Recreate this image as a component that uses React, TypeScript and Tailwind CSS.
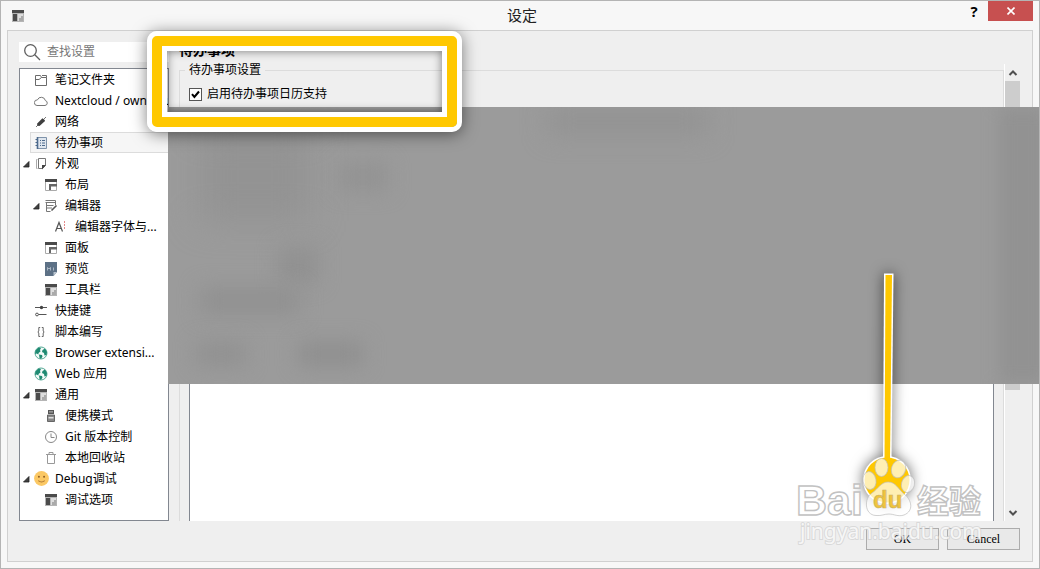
import React, { useState } from 'react';

const S = 'w-[14px] h-[14px] shrink-0';

const FolderIcon = () => (
    <svg viewBox="0 0 14 14" className={S} fill="none" stroke="#6b6b6b">
        <path d="M1.5 12.5V2.5H6.5L7.5 4.5H12.5V12.5Z" />
        <path d="M1.5 6.5H5L7.5 4.5M8 2.5H12.5V4.5" />
    </svg>
);
const CloudIcon = () => (
    <svg viewBox="0 0 14 14" className={S} fill="none" stroke="#777">
        <path d="M3 11.5H11A2.5 2.5 0 0 0 11.4 6.6A4.2 4.2 0 0 0 3.4 5.9A2.8 2.8 0 0 0 3 11.5Z" />
    </svg>
);
const PlugIcon = () => (
    <svg viewBox="0 0 14 14" className={S}>
        <path d="M2 12L4.5 9.5M9.5 4.5L12 2" stroke="#777" />
        <path d="M3 8.8L8.4 3.2L11 5.3L10.5 6.5L5.5 11L3.5 10.8Z" fill="#3f3f3f" />
    </svg>
);
const TodoIcon = () => (
    <svg viewBox="0 0 14 14" className={S} stroke="#4d6a8c">
        <path d="M3.5 1.5H12.5V12.5H3.5Z" fill="#dfe6ee" stroke="#7f93aa" />
        <path d="M3.5 1V13" strokeWidth="1.6" />
        <path d="M1.5 3.5H4M1.5 6.5H4M1.5 9.5H4M6 4.5H7M8 4.5H11M6 7H7M8 7H11M6 9.5H7M8 9.5H11" />
    </svg>
);
const LookIcon = () => (
    <svg viewBox="0 0 14 14" className={S} fill="none">
        <path d="M3.5 11.5H2.5V2.5H3.5" stroke="#aaa" />
        <path d="M4.5 1.5H11.5V8.5L8.5 11.5H4.5Z" stroke="#777" />
        <path d="M12 8L8 12.5V8Z" fill="#444" />
    </svg>
);
const LayoutIcon = () => (
    <svg viewBox="0 0 14 14" className={S}>
        <path d="M1.5 2.5H12.5V12.5H1.5Z" fill="#fff" stroke="#aaa" />
        <path d="M1 1H13V4H1Z" fill="#4a4a4a" />
        <path d="M5 6H13V8.5H7V12H5Z" fill="#666" />
    </svg>
);
const EditIcon = () => (
    <svg viewBox="0 0 14 14" className={S} fill="none" stroke="#777">
        <path d="M1.5 1.5H11.5V6M1.5 3.5H11.5M3 6.5H9.5M3 9H8M2.5 4V12.5H6.5" />
        <path d="M7.5 11.5L12.5 6.5" stroke="#555" strokeWidth="1.6" />
    </svg>
);
const FontIcon = () => (
    <svg viewBox="0 0 14 14" className={S} fill="none" stroke="#555">
        <path d="M1.5 11.5L5 2.5L8.5 11.5M2.8 8.5H7.2" strokeWidth="1.2" />
        <path d="M10.5 1V9" stroke="#e58a8a" strokeDasharray="2 1" />
    </svg>
);
const PreviewIcon = () => (
    <svg viewBox="0 0 14 14" className={S}>
        <path d="M1 0H13V10L9.5 14H1Z" fill="#5d7186" />
        <path d="M13 10H9.5V14Z" fill="#b8c3ce" />
        <path d="M3.5 8.5V5.5L5 7L6.5 5.5V8.5M9.5 5.5V8.5" stroke="#b4c0cb" strokeWidth="0.9" fill="none" />
    </svg>
);
const PanelIcon = () => (
    <svg viewBox="0 0 14 14" className={S}>
        <path d="M1 1H13V13H1Z" fill="#b5b5b5" />
        <path d="M1 1H13V4H1ZM2 5H6V12H2Z" fill="#4b4b4b" />
        <path d="M7 5H12V12H7Z" fill="#ddd" />
        <path d="M8 12V9H10V7H12V12Z" fill="#aaa" />
    </svg>
);
const SlidersIcon = () => (
    <svg viewBox="0 0 14 14" className={S} fill="none" stroke="#555">
        <path d="M1 3.5H13M4.5 10.5H12.5" />
        <circle cx="7.5" cy="3.5" r="1.7" fill="#444" stroke="none" />
        <circle cx="3" cy="10.5" r="1.4" />
    </svg>
);
const BracesIcon = () => (
    <svg viewBox="0 0 14 14" className={S} fill="none" stroke="#666">
        <path d="M6.2 2.5H4.8V6L3.8 7L4.8 8V11.5H6.2M7.8 2.5H9.2V6L10.2 7L9.2 8V11.5H7.8" />
    </svg>
);
const GlobeIcon = () => (
    <svg viewBox="0 0 14 14" className={S}>
        <circle cx="7" cy="7" r="6" fill="#f3faf8" stroke="#46a08b" strokeWidth="0.9" />
        <path d="M1.5 4.5L4.5 1.4L7 2L6 4L6.5 5.5L4.5 7L4.5 8.5L2.5 7.5L1 8ZM8.5 4L11 2.5L13 6L12.5 9L10.5 9.5L10 7L8 6ZM5 8.5L8 9L8.5 10.5L7 13L5.5 12Z" fill="#1f8a72" />
    </svg>
);
const DriveIcon = () => (
    <svg viewBox="0 0 14 14" className={S}>
        <path d="M4 1H10V5H4Z" fill="#555" />
        <path d="M5.5 2.3H6.5V3.5H5.5ZM7.5 2.3H8.5V3.5H7.5Z" fill="#fff" />
        <path d="M3.5 6H10.5V12.5H3.5Z" fill="#888" stroke="#666" />
        <path d="M4.5 8H9.5V9.5H4.5Z" fill="#ddd" />
    </svg>
);
const ClockIcon = () => (
    <svg viewBox="0 0 14 14" className={S} fill="none" stroke="#888">
        <circle cx="7" cy="7" r="5.5" />
        <path d="M7 3.5V7.5H10.5" />
    </svg>
);
const TrashIcon = () => (
    <svg viewBox="0 0 14 14" className={S} fill="none" stroke="#999">
        <path d="M2 3.5H12M5 3V1.5H9V3M3.5 4V12.5H10.5V4" />
    </svg>
);
const SmileIcon = () => (
    <svg viewBox="0 0 14 14" className="h-[15px] w-[15px] shrink-0 -mr-px">
        <circle cx="7" cy="7" r="6.9" fill="#fbc864" />
        <circle cx="4.6" cy="5.4" r="0.9" fill="#8a5a22" />
        <circle cx="9.4" cy="5.4" r="0.9" fill="#8a5a22" />
        <path d="M4 9Q7 11.5 10 9" stroke="#b07a35" fill="none" />
    </svg>
);

type Node = { text: string; icon: () => React.ReactElement; level: 0 | 1 | 2; open?: boolean };

const nodes: Node[] = [
    { text: '笔记文件夹', icon: FolderIcon, level: 0 },
    { text: 'Nextcloud / ownCloud', icon: CloudIcon, level: 0 },
    { text: '网络', icon: PlugIcon, level: 0 },
    { text: '待办事项', icon: TodoIcon, level: 0 },
    { text: '外观', icon: LookIcon, level: 0, open: true },
    { text: '布局', icon: LayoutIcon, level: 1 },
    { text: '编辑器', icon: EditIcon, level: 1, open: true },
    { text: '编辑器字体与...', icon: FontIcon, level: 2 },
    { text: '面板', icon: LayoutIcon, level: 1 },
    { text: '预览', icon: PreviewIcon, level: 1 },
    { text: '工具栏', icon: PanelIcon, level: 1 },
    { text: '快捷键', icon: SlidersIcon, level: 0 },
    { text: '脚本编写', icon: BracesIcon, level: 0 },
    { text: 'Browser extensi...', icon: GlobeIcon, level: 0 },
    { text: 'Web 应用', icon: GlobeIcon, level: 0 },
    { text: '通用', icon: PanelIcon, level: 0, open: true },
    { text: '便携模式', icon: DriveIcon, level: 1 },
    { text: 'Git 版本控制', icon: ClockIcon, level: 1 },
    { text: '本地回收站', icon: TrashIcon, level: 1 },
    { text: 'Debug调试', icon: SmileIcon, level: 0, open: true },
    { text: '调试选项', icon: PanelIcon, level: 1 },
];

const indent = ['pl-0', 'pl-2.5', 'pl-5'];

const Sidebar = () => {
    const [selected, setSelected] = useState(3);
    return (
        <aside className="flex w-[150px] shrink-0 flex-col gap-1.5">
            <label className="flex h-5 items-center bg-white pl-1">
                <svg viewBox="0 0 18 18" className="h-[18px] w-[18px] shrink-0" fill="none" stroke="#5f5f5f" strokeWidth="1.3">
                    <circle cx="7.5" cy="7.5" r="5.8" />
                    <path d="M11.8 11.8L17 17" />
                </svg>
                <input
                    aria-label="查找设置"
                    placeholder="查找设置"
                    className="ml-1.5 w-full min-w-0 bg-transparent text-xs outline-none placeholder:text-[#777]"
                />
            </label>
            <ul className="flex-1 border border-[#828790] bg-white">
                {nodes.map((node, idx) => (
                    <li key={idx} className={`flex h-[21px] items-center ${indent[node.level]}`}>
                        <span className="w-2.5 shrink-0">
                            {node.open && (
                                <svg viewBox="0 0 8 8" className="ml-0.5 h-2 w-2">
                                    <path d="M7 1.5V7H1.5Z" fill="#404040" stroke="#222" strokeWidth="0.8" />
                                </svg>
                            )}
                        </span>
                        <button
                            onClick={() => setSelected(idx)}
                            className={`flex h-full min-w-0 flex-1 items-center gap-[7px] border border-r-0 pl-[3px] text-left ${
                                selected === idx ? 'border-[#dcdcdc] bg-[#f6f6f6]' : 'border-transparent'
                            }`}
                        >
                            <node.icon />
                            <span className="overflow-hidden whitespace-nowrap">{node.text}</span>
                        </button>
                    </li>
                ))}
            </ul>
        </aside>
    );
};

const ScrollBar = () => (
    <div className="mt-[22px] flex w-4 shrink-0 flex-col border-l border-white">
        <button aria-label="向上" className="flex h-[17px] shrink-0 items-center justify-center">
            <svg viewBox="0 0 10 8" className="h-2 w-2.5" fill="none" stroke="#505050" strokeWidth="2">
                <path d="M1.5 6L5 2.5L8.5 6" />
            </svg>
        </button>
        <div className="flex-[309] bg-[#cdcdcd]" />
        <div className="flex-[114]" />
        <button aria-label="向下" className="flex h-[17px] shrink-0 items-center justify-center">
            <svg viewBox="0 0 10 8" className="h-2 w-2.5" fill="none" stroke="#505050" strokeWidth="2">
                <path d="M1.5 2L5 5.5L8.5 2" />
            </svg>
        </button>
    </div>
);

const TodoPage = () => (
    <section className="ml-2.5 flex min-w-0 flex-1 flex-col">
        <h2 className="h-[18px] text-sm leading-4 font-bold">待办事项</h2>
        <fieldset className="flex min-w-0 flex-1 flex-col border border-b-0 border-[#dcdcdc] px-[5px]">
            <legend className="px-1 leading-5">待办事项设置</legend>
            <div className="flex flex-1 flex-col px-1 pt-1">
                <label className="flex h-5 items-center gap-[5px]">
                    <span className="grid h-[13px] w-[13px]">
                        <input
                            type="checkbox"
                            defaultChecked
                            className="peer col-start-1 row-start-1 appearance-none border border-[#555] bg-white"
                        />
                        <svg
                            viewBox="0 0 13 13"
                            className="invisible pointer-events-none col-start-1 row-start-1 peer-checked:visible"
                            fill="none"
                            stroke="#000"
                            strokeWidth="2"
                        >
                            <path d="M3 6.2L5.4 9L10 3.5" />
                        </svg>
                    </span>
                    启用待办事项日历支持
                </label>
                <textarea
                    aria-label="待办事项"
                    className="mt-10 w-full flex-1 resize-none border border-b-0 border-[#828790] bg-white outline-none"
                />
            </div>
        </fieldset>
    </section>
);

// greyed out area below the highlighted setting
const Mask = () => (
    <div className="pointer-events-none absolute top-[106px] right-0 left-[167px] h-[277px] overflow-hidden bg-[#9b9b9b]">
        <div className="absolute top-0 left-[380px] h-7 w-[160px] bg-[#939393] blur-[12px]" />
        <div className="absolute top-6 left-8 h-[90px] w-[110px] bg-[#939393] blur-[16px]" />
        <div className="absolute top-14 left-[170px] h-7 w-[50px] bg-[#939393] blur-[10px]" />
        <div className="absolute top-[140px] left-[110px] h-9 w-10 bg-[#919191] blur-[10px]" />
        <div className="absolute top-[180px] left-8 h-7 w-[100px] bg-[#919191] blur-[10px]" />
        <div className="absolute top-[235px] left-7 h-6 w-[50px] bg-[#919191] blur-[10px]" />
        <div className="absolute top-[235px] left-[130px] h-6 w-[65px] bg-[#8f8f8f] blur-[10px]" />
        <div className="absolute top-0 -right-2 bottom-0 w-12 bg-[#929292] blur-[8px]" />
    </div>
);

const Highlight = () => (
    <div className="pointer-events-none absolute top-[30px] left-[146px] h-[101px] w-[315px] rounded-[10px] border-[5px] border-white shadow-[0_2px_16px_rgba(0,0,0,0.5)]">
        <div className="h-full rounded-[5px] border-10 border-[#ffc800] bg-clip-padding">
            <div className="h-full border-[5px] border-white">
                <div className="h-full shadow-[inset_0_0_10px_rgba(0,0,0,0.5)]" />
            </div>
        </div>
    </div>
);

const Pointer = () => (
    <svg
        viewBox="790 262 200 290"
        className="pointer-events-none absolute top-[261px] right-[49px] h-[290px] w-[200px] overflow-visible"
    >
        <g className="drop-shadow-[0_0_7px_rgba(0,0,0,0.6)]">
            <path d="M884 273.5H893.5L891.5 460H883Z" fill="#fff" />
            <circle cx="887" cy="480" r="24" fill="#fff" />
        </g>
        <path d="M885.5 275H892L890 462H884.5Z" fill="#ffc800" />
        <circle cx="887" cy="480" r="22.5" fill="#ffc800" />
        <g fill="#fff" fillOpacity="0.7" stroke="#bdbdbd" strokeOpacity="0.7">
            <ellipse cx="881.5" cy="467.5" rx="6.5" ry="9" />
            <ellipse cx="898.5" cy="469" rx="7" ry="9" transform="rotate(18 898.5 469)" />
            <ellipse cx="869.5" cy="480.5" rx="6.5" ry="9" transform="rotate(-10 869.5 480.5)" />
            <ellipse cx="908" cy="484" rx="6.5" ry="8.5" transform="rotate(15 908 484)" />
            <path d="M888 482C881 482 878 489 872 493C864 498 864 515 876 515.5C882 516 884 514 889 514C894 514 898 517 904 515C914 511 912 500 904 494C898 489 896 482 888 482Z" />
        </g>
        <g fontWeight="bold" fontFamily="'Liberation Sans', sans-serif">
            <text x="873" y="508" fontSize="24" fill="#f0c43c" stroke="#c9b06a" strokeWidth="0.6">du</text>
            <g fill="#fff" fillOpacity="0.8" stroke="#c2c2c2" strokeWidth="1.4">
                <text x="796" y="515" fontSize="43">Bai</text>
                <text x="917" y="513" fontSize="32" fontFamily="'Noto Sans CJK SC', sans-serif">经验</text>
            </g>
        </g>
        <text
            x="800"
            y="539"
            fontSize="21"
            fontFamily="'Noto Sans', sans-serif"
            fill="#fff"
            fillOpacity="0.8"
            stroke="#d0d0d0"
            strokeOpacity="0.7"
            strokeWidth="2"
            paintOrder="stroke"
        >
            jingyan.baidu.com
        </text>
    </svg>
);

export default function App() {
    return (
        <div className="relative flex min-h-screen flex-col border border-[#b4b4b4] bg-[#f7f7f7] px-1.5 pb-1.5 font-['Noto_Sans','Noto_Sans_CJK_SC',sans-serif] text-xs text-black">
            <header className="flex h-[29px] shrink-0 items-start">
                <div className="flex h-full flex-1 items-center pl-1">
                    <PanelIcon />
                </div>
                <h1 className="text-[15px] leading-[29px] text-[#222]">设定</h1>
                <div className="flex flex-1 justify-end">
                    <button aria-label="帮助" className="h-5 w-7 font-['Open_Sans',sans-serif] text-[15px] leading-5 font-bold">?</button>
                    <button aria-label="关闭" className="flex h-5 w-[45px] items-center justify-center bg-[#c75050]">
                        <svg viewBox="0 0 8 8" className="h-2 w-2" stroke="#fff" strokeWidth="1.6">
                            <path d="M0.5 0.5L7.5 7.5M7.5 0.5L0.5 7.5" />
                        </svg>
                    </button>
                </div>
            </header>
            <main className="flex flex-1 flex-col border border-[#d0d0d0] bg-[#efefef] pt-[11px] pr-3 pb-[11px] pl-[11px]">
                <div className="flex flex-1">
                    <Sidebar />
                    <TodoPage />
                    <ScrollBar />
                </div>
                <div className="mt-[7px] flex justify-end gap-2 font-['Liberation_Serif',serif]">
                    <button className="h-[22px] w-[73px] border border-[#acacac] bg-[#e9e9e9]">OK</button>
                    <button className="h-[22px] w-[73px] border border-[#acacac] bg-[#e9e9e9]">Cancel</button>
                </div>
            </main>
            <Mask />
            <Highlight />
            <Pointer />
        </div>
    );
}
